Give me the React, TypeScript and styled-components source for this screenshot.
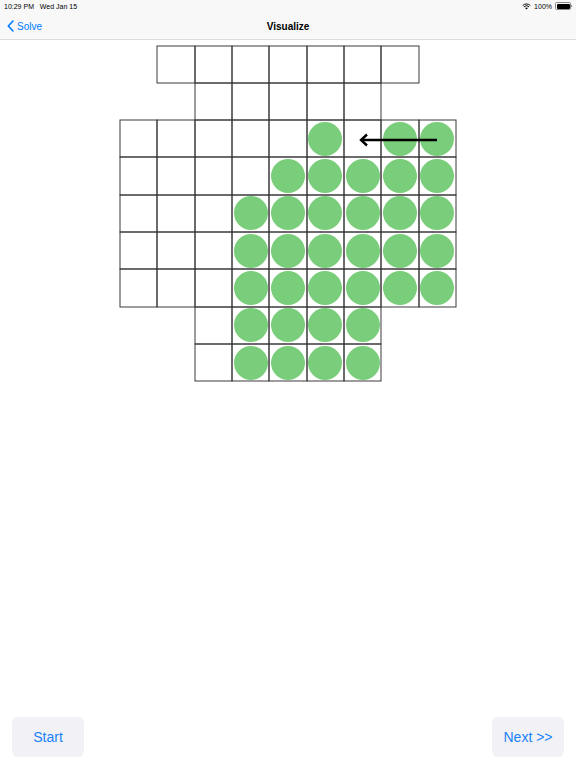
import React from 'react'
import styled, { createGlobalStyle } from 'styled-components'

const GlobalStyle = createGlobalStyle`
  html, body {
    margin: 0;
    padding: 0;
    background: #fff;
    font-family: "Liberation Sans", Arial, sans-serif;
  }
`

const Page = styled.div`
  display: flex;
  flex-direction: column;
  height: 768px;
  width: 576px;
  overflow: hidden;
`

const Header = styled.div`
  background: #f8f8f8;
  border-bottom: 1px solid #dcdcdc;
  height: 40px;
  box-sizing: border-box;
  display: flex;
  flex-direction: column;
`

const StatusBar = styled.div`
  height: 12px;
  display: flex;
  align-items: center;
  justify-content: space-between;
  padding: 0 5px 0 4px;
  font-size: 7px;
  color: #000;
`

const StatusRight = styled.div`
  display: flex;
  align-items: center;
  gap: 3px;
`

const Battery = styled.div`
  width: 13px;
  height: 5px;
  border: 0.5px solid #888;
  border-radius: 1.5px;
  padding: 0.5px;
  position: relative;
  &::before {
    content: '';
    display: block;
    width: 100%;
    height: 100%;
    background: #000;
    border-radius: 1px;
  }
  &::after {
    content: '';
    position: absolute;
    right: -2px;
    top: 1.5px;
    width: 1px;
    height: 2px;
    background: #888;
  }
`

const NavBar = styled.div`
  flex: 1;
  display: flex;
  align-items: center;
  position: relative;
  padding: 1px 0 0 7px;
`

const Back = styled.div`
  display: flex;
  align-items: center;
  gap: 3px;
  color: #007aff;
  font-size: 10px;
`

const Title = styled.div`
  position: absolute;
  left: 0;
  right: 0;
  text-align: center;
  font-size: 10px;
  font-weight: 700;
  pointer-events: none;
`

const Content = styled.div`
  flex: 1;
  display: flex;
  justify-content: center;
  padding-top: 5.5px;
`

const Board = styled.div`
  position: relative;
  display: grid;
  grid-template-columns: repeat(9, 37.33px);
  grid-template-rows: repeat(9, 37.33px);
  align-self: flex-start;
`

const Cell = styled.div<{ $row: number; $col: number }>`
  grid-row: ${p => p.$row + 1};
  grid-column: ${p => p.$col + 1};
  box-shadow: 0 0 0 0.5px #3a3a3a, inset 0 0 0 0.5px #3a3a3a;
  display: flex;
  align-items: center;
  justify-content: center;
`

const Peg = styled.div`
  width: 34px;
  height: 34px;
  border-radius: 50%;
  background: #7acd7a;
`

const Arrow = styled.svg`
  position: absolute;
  left: 236px;
  top: 86px;
  overflow: visible;
`

const Footer = styled.div`
  display: flex;
  justify-content: space-between;
  padding: 0 12px 11px;
`

const Button = styled.div`
  width: 72px;
  height: 40px;
  border-radius: 6px;
  background: #f1f1f6;
  color: #1a82f7;
  font-size: 14px;
  display: flex;
  align-items: center;
  justify-content: center;
`

// rows: [row, firstCol, lastCol]
const shape: [number, number, number][] = [
  [0, 1, 7],
  [1, 2, 6],
  [2, 0, 8],
  [3, 0, 8],
  [4, 0, 8],
  [5, 0, 8],
  [6, 0, 8],
  [7, 2, 6],
  [8, 2, 6],
]

const pegs = new Set<string>([
  '2-5', '2-7', '2-8',
  '3-4', '3-5', '3-6', '3-7', '3-8',
  ...[4, 5, 6].flatMap(r => [3, 4, 5, 6, 7, 8].map(c => `${r}-${c}`)),
  ...[7, 8].flatMap(r => [3, 4, 5, 6].map(c => `${r}-${c}`)),
])

const App = () => (
  <Page>
    <GlobalStyle />
    <Header>
      <StatusBar>
        <span>10:29 PM&nbsp;&nbsp;&nbsp;Wed Jan 15</span>
        <StatusRight>
          <svg width="9" height="7" viewBox="0 0 12 9">
            <path d="M6 8.5 L4.2 6.6 A2.6 2.6 0 0 1 7.8 6.6 Z" fill="#000" />
            <path d="M2.6 5 A4.8 4.8 0 0 1 9.4 5" stroke="#000" strokeWidth="1.3" fill="none" />
            <path d="M0.9 3.2 A7.3 7.3 0 0 1 11.1 3.2" stroke="#000" strokeWidth="1.3" fill="none" />
          </svg>
          <span>100%</span>
          <Battery />
        </StatusRight>
      </StatusBar>
      <NavBar>
        <Back>
          <svg width="7" height="12" viewBox="0 0 7 12">
            <path d="M6 1 L1.3 6 L6 11" stroke="#007aff" strokeWidth="1.6" fill="none" strokeLinecap="round" strokeLinejoin="round" />
          </svg>
          <span>Solve</span>
        </Back>
        <Title>Visualize</Title>
      </NavBar>
    </Header>
    <Content>
      <Board>
        {shape.flatMap(([r, a, b]) =>
          Array.from({ length: b - a + 1 }, (_, i) => a + i).map(c => (
            <Cell key={`${r}-${c}`} $row={r} $col={c}>
              {pegs.has(`${r}-${c}`) && <Peg />}
            </Cell>
          ))
        )}
        <Arrow width="82" height="16" viewBox="0 0 82 16">
          <path d="M81 8 L5 8" stroke="#000" strokeWidth="2.4" fill="none" />
          <path d="M11 2.5 L5 8 L11 13.5" stroke="#000" strokeWidth="2.4" fill="none" />
        </Arrow>
      </Board>
    </Content>
    <Footer>
      <Button>Start</Button>
      <Button>Next &gt;&gt;</Button>
    </Footer>
  </Page>
)

export default App
